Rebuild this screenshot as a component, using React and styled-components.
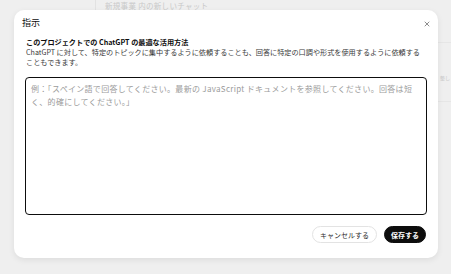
import React from "react";
import styled, { createGlobalStyle } from "styled-components";
import { X } from "lucide-react";

const GlobalStyle = createGlobalStyle`
  html, body {
    margin: 0;
    padding: 0;
    background: #efefef;
    font-family: "Noto Sans CJK JP", "Noto Sans", "Liberation Sans", sans-serif;
  }
`;

const App = () => {
    return (
        <Page>
            <GlobalStyle />
            <Backdrop>
                <TopBar>
                    <Divider />
                    <ChatName>新規事業 内の新しいチャット</ChatName>
                </TopBar>
                <SideList>
                    <SideRow>整し</SideRow>
                    <SideRow />
                </SideList>
            </Backdrop>

            <Modal>
                <Header>
                    <Title>指示</Title>
                    <CloseBtn>
                        <X size={8} strokeWidth={1.5} />
                    </CloseBtn>
                </Header>
                <Body>
                    <Lead>このプロジェクトでの ChatGPT の最適な活用方法</Lead>
                    <Desc>
                        ChatGPT に対して、特定のトピックに集中するように依頼することも、回答に特定の口調や形式を使用するように依頼することもできます。
                    </Desc>
                    <TextBox placeholder="例：「スペイン語で回答してください。最新の JavaScript ドキュメントを参照してください。回答は短く、的確にしてください。」" />
                    <Footer>
                        <Button>キャンセルする</Button>
                        <Button primary>保存する</Button>
                    </Footer>
                </Body>
            </Modal>
        </Page>
    );
};

const Page = styled.div`
  position: relative;
  width: 451px;
  height: 274px;
  overflow: hidden;
  background: #efefef;
`;

const Backdrop = styled.div`
  display: flex;
  height: 100%;
`;

const TopBar = styled.div`
  flex: 1;
  display: flex;
  align-items: flex-start;
  gap: 9px;
  padding-left: 95px;
`;

const Divider = styled.div`
  width: 1px;
  height: 13px;
  background: #e2e2e2;
`;

const ChatName = styled.div`
  font-size: 7.5px;
  line-height: 11px;
  color: #c9c9c9;
  letter-spacing: 0.3px;
`;

const SideList = styled.div`
  width: 20px;
  padding-top: 42px;
  display: flex;
  flex-direction: column;
`;

const SideRow = styled.div`
  height: 58px;
  border-top: 1px solid #e6e6e6;
  padding-left: 9px;
  font-size: 5px;
  line-height: 69px;
  color: #c8c8c8;
  white-space: nowrap;
`;

const Modal = styled.div`
  position: absolute;
  left: 14px;
  top: 10px;
  width: 424px;
  height: 248px;
  box-sizing: border-box;
  background: #ffffff;
  border-radius: 10px;
  box-shadow: 0 2px 6px rgba(0, 0, 0, 0.08);
  display: flex;
  flex-direction: column;
`;

const Header = styled.div`
  display: flex;
  align-items: center;
  justify-content: space-between;
  padding: 6px 6px 0 8px;
  height: 14px;
`;

const Title = styled.div`
  font-size: 9px;
  line-height: 14px;
  color: #0d0d0d;
`;

const CloseBtn = styled.div`
  display: flex;
  align-items: center;
  justify-content: center;
  width: 10px;
  height: 10px;
  margin-top: 2px;
  color: #1a1a1a;
`;

const Body = styled.div`
  flex: 1;
  display: flex;
  flex-direction: column;
  padding: 7px 11px 15px 11px;
`;

const Lead = styled.div`
  font-size: 7.15px;
  line-height: 10px;
  font-weight: 700;
  color: #0d0d0d;
  padding-left: 1px;
`;

const Desc = styled.div`
  font-size: 7.15px;
  line-height: 10px;
  color: #3a3a3a;
  padding-left: 1px;
  padding-right: 4px;
`;

const TextBox = styled.textarea`
  margin-top: 10px;
  height: 138px;
  box-sizing: border-box;
  resize: none;
  border: 1.3px solid #0d0d0d;
  border-radius: 4px;
  padding: 5px 8px 5px 5px;
  font-family: inherit;
  font-size: 8px;
  line-height: 12.5px;
  letter-spacing: 0.3px;
  outline: none;

  &::placeholder {
    color: #9b9b9b;
  }
`;

const Footer = styled.div`
  display: flex;
  justify-content: flex-end;
  gap: 7px;
  margin-top: 11px;
  padding-right: 1px;
`;

const Button = styled.div`
  display: flex;
  align-items: center;
  justify-content: center;
  height: 17px;
  box-sizing: border-box;
  padding: 0 ${(p) => (p.primary ? "6px" : "7px")};
  border-radius: 999px;
  font-size: 7px;
  font-weight: ${(p) => (p.primary ? 700 : 400)};
  background: ${(p) => (p.primary ? "#0d0d0d" : "#ffffff")};
  color: ${(p) => (p.primary ? "#ffffff" : "#2d2d2d")};
  border: 1px solid ${(p) => (p.primary ? "#0d0d0d" : "#e3e3e3")};
`;

export default App;
